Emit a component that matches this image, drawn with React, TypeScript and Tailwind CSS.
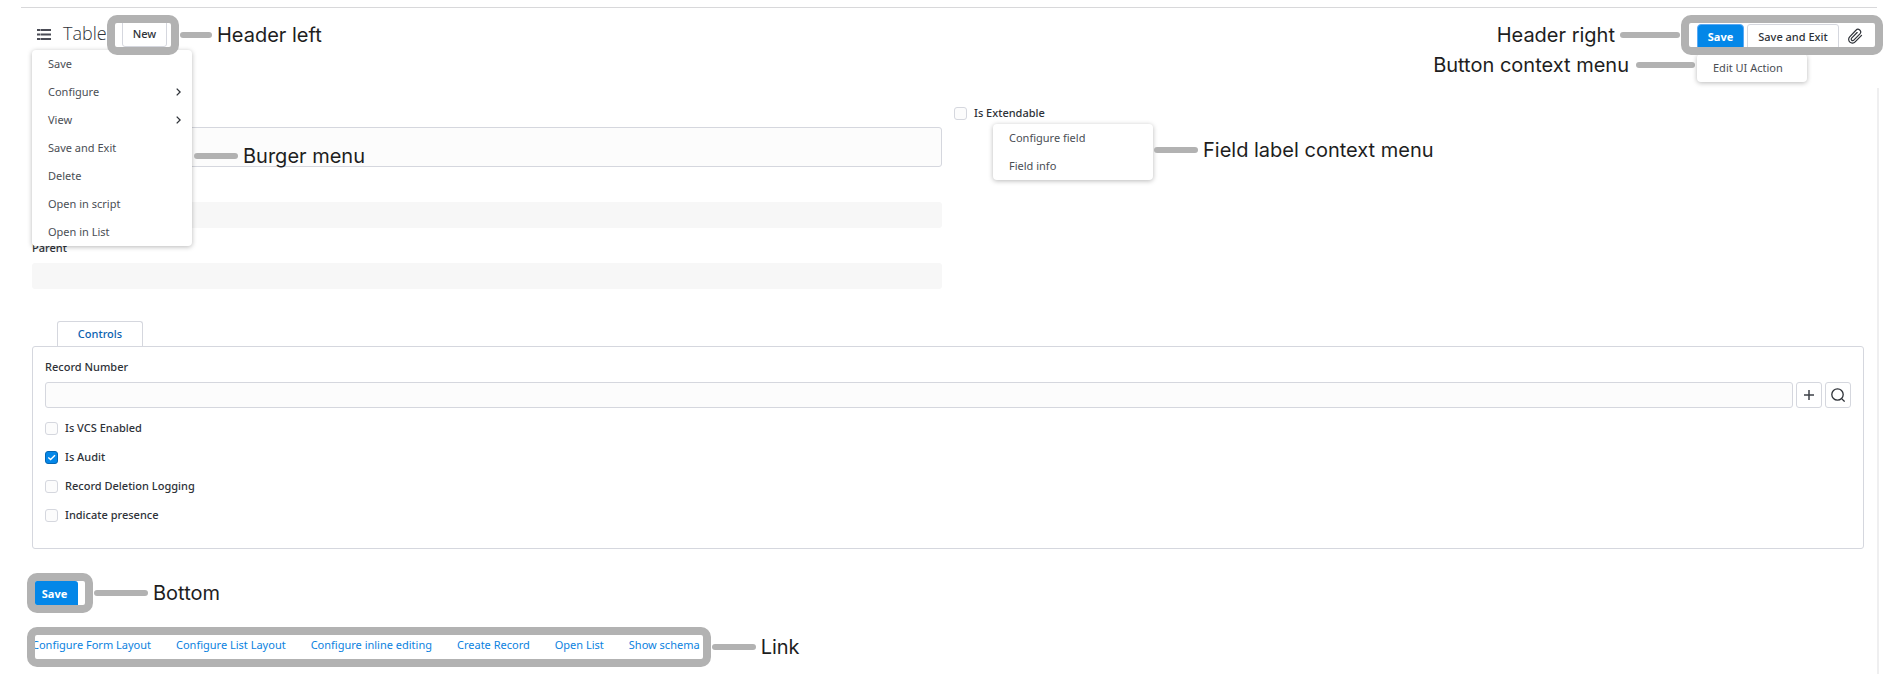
import { ReactNode, useId } from "react";

const burgerItems = [
  { label: "Save" },
  { label: "Configure", nested: true },
  { label: "View", nested: true },
  { label: "Save and Exit" },
  { label: "Delete" },
  { label: "Open in script" },
  { label: "Open in List" },
];

const controls = [
  { label: "Is VCS Enabled" },
  { label: "Is Audit", checked: true },
  { label: "Record Deletion Logging" },
  { label: "Indicate presence" },
];

const links = [
  "Configure Form Layout",
  "Configure List Layout",
  "Configure inline editing",
  "Create Record",
  "Open List",
  "Show schema",
];

function Connector({ className }: { className: string }) {
  return <span className={`h-1.5 shrink-0 rounded-full bg-[#b2b2b2] ${className}`} />;
}

function Note({ children }: { children: ReactNode }) {
  return (
    <span className="whitespace-nowrap font-['Inter',sans-serif] text-xl leading-6 text-[#1e1e1e]">
      {children}
    </span>
  );
}

function Frame({ children, className }: { children: ReactNode; className: string }) {
  return (
    <div
      className={`flex h-10 shrink-0 overflow-hidden rounded-[10px] border-8 border-[#b2b2b2] bg-white ${className}`}
    >
      {children}
    </div>
  );
}

function Menu({
  items,
  className,
}: {
  items: { label: string; nested?: boolean }[];
  className: string;
}) {
  return (
    <ul className={`rounded bg-white shadow-[0_1px_5px_rgba(0,0,0,0.28)] ${className}`}>
      {items.map((item) => (
        <li key={item.label}>
          <button
            type="button"
            className="flex h-7 w-full items-center justify-between whitespace-nowrap pl-4 pr-[11px] text-left text-[11px] text-[#4a4e54]"
          >
            {item.label}
            {item.nested && (
              <svg viewBox="0 0 5 8" className="h-2 w-[5px]" fill="none" stroke="#2e3238" strokeWidth="1.3">
                <path d="M0.7 0.6 4.1 4 0.7 7.4" />
              </svg>
            )}
          </button>
        </li>
      ))}
    </ul>
  );
}

function Checkbox({ label, checked }: { label: string; checked?: boolean }) {
  const id = useId();
  return (
    <div className="flex h-[29px] items-center gap-[7px]">
      <span className="relative flex">
        <input
          id={id}
          type="checkbox"
          defaultChecked={checked}
          className="peer size-[13px] appearance-none rounded-[3px] border border-[#d5d7de] bg-[#fcfcfc] checked:border-[#0566b3] checked:bg-[#0487e8]"
        />
        <svg
          viewBox="0 0 13 13"
          className="pointer-events-none absolute inset-0 hidden size-[13px] peer-checked:block"
          fill="none"
          stroke="#fff"
          strokeWidth="1.4"
        >
          <path d="M3.3 6.5 5.6 8.6 10 4.2" />
        </svg>
      </span>
      <label htmlFor={id} className="text-[11px] font-medium text-[#2e3238]">
        {label}
      </label>
    </div>
  );
}

export default function App() {
  return (
    <div className="bg-white pt-[7px] font-['Noto_Sans',sans-serif] text-[#2e3238]">
      <div className="ml-[21px] mr-3 h-px bg-[#d8d8da]" />

      <header className="flex h-20 justify-between pl-[37px] pr-1.5 pt-[7px]">
        <div className="relative flex h-10 items-center">
          <button type="button" aria-label="Menu" className="mr-3 pb-0.5">
            <svg viewBox="0 0 14 11" className="h-[11px] w-3.5" fill="#4a4c55">
              <path d="M0 0H14V2H0zM0 4.5H14V6.5H0zM0 9H14V11H0z" />
              <path d="M3 0H4V11H3z" fill="#fff" fillOpacity="0.45" />
            </svg>
          </button>
          <h1 className="w-11 pb-1 font-['Open_Sans',sans-serif] text-lg font-light leading-6 text-[#2e3238]">
            Table
          </h1>
          <Frame className="relative z-20 w-[72px] pl-[7px]">
            <button
              type="button"
              className="-mt-2 h-8 w-[45px] rounded-[3px] border border-[#d5d7de] pt-1.5 text-[11px] font-medium"
            >
              New
            </button>
          </Frame>
          <Connector className="ml-px mr-[5px] w-8" />
          <Note>Header left</Note>

          <div className="absolute -left-[5px] top-[35px] z-10 flex items-center">
            <Menu items={burgerItems} className="w-40" />
            <div className="ml-0.5 flex items-center gap-[5px] pt-4">
              <Connector className="w-11" />
              <Note>Burger menu</Note>
            </div>
          </div>
        </div>

        <div className="flex flex-col items-end">
          <div className="relative z-20 flex items-center">
            <Note>Header right</Note>
            <Connector className="ml-[5px] mr-px w-[60px]" />
            <Frame className="w-[202px] items-start gap-[3px] pl-2">
              <button
                type="button"
                className="mt-px h-7 w-[47px] rounded-sm border border-[#5aa9f5] bg-[#0487e8] pb-0.5 text-[11px] font-bold text-white"
              >
                Save
              </button>
              <button
                type="button"
                className="mt-px h-7 w-[92px] whitespace-nowrap rounded-[3px] border border-[#d5d7de] pb-0.5 text-[11px] font-medium"
              >
                Save and Exit
              </button>
              <button type="button" aria-label="Attachments" className="ml-[5px] mt-[5px]">
                <svg
                  viewBox="0 0 24 24"
                  className="size-4"
                  fill="none"
                  stroke="#2e3238"
                  strokeWidth="1.8"
                  strokeLinecap="round"
                  strokeLinejoin="round"
                >
                  <path d="m21.8 11-9.6 9.8a5.4 5.4 0 0 1-8.2-7.6L13.4 3.4a4 4 0 0 1 6 5.4l-9.2 9.4a2.2 2.2 0 0 1-3.3-3l8.3-8.4" />
                </svg>
              </button>
            </Frame>
          </div>
          <div className="relative z-10 -mt-0.5 mr-[76px] flex items-center">
            <div className="flex items-center pb-1.5">
              <Note>Button context menu</Note>
              <Connector className="ml-[7px] mr-0.5 w-[59px]" />
            </div>
            <Menu items={[{ label: "Edit UI Action" }]} className="w-[110px]" />
          </div>
        </div>
      </header>

      <main className="ml-8 mr-2.5 border-r-2 border-[#efeff0] pb-[7px] pr-[13px]">
        <div className="grid grid-cols-2 gap-3">
          <div className="flex flex-col pt-[39px]">
            <textarea
              aria-label="Table"
              className="h-10 resize-none rounded-[3px] border border-[#d5d7de] bg-[#fcfcfc]"
            />
            <input aria-label="Table" disabled className="mt-[35px] h-[26px] rounded-[3px] bg-[#f7f7f7]" />
            <label htmlFor="parent" className="pb-1.5 pt-[11px] text-[11px] font-medium leading-[18px]">
              Parent
            </label>
            <input id="parent" disabled className="h-[26px] rounded-[3px] bg-[#f7f7f7]" />
          </div>
          <div className="relative pt-[11px]">
            <Checkbox label="Is Extendable" />
            <div className="absolute left-[39px] top-9 flex items-center">
              <Menu items={[{ label: "Configure field" }, { label: "Field info" }]} className="w-40" />
              <div className="flex items-center pb-1">
                <Connector className="ml-px mr-[5px] w-11" />
                <Note>Field label context menu</Note>
              </div>
            </div>
          </div>
        </div>

        <div className="mt-8 flex pl-[25px]">
          <button
            type="button"
            className="h-[25px] w-[86px] rounded-t-[3px] border border-b-0 border-[#d5d7de] text-[11px] font-medium text-[#0a62b0]"
          >
            Controls
          </button>
        </div>
        <section className="rounded-[3px] border border-[#d5d7de] px-3 pb-[18px] pt-[11px]">
          <label htmlFor="record-number" className="block text-[11px] font-medium leading-[18px]">
            Record Number
          </label>
          <div className="mb-1.5 mt-1.5 flex gap-[3px]">
            <input
              id="record-number"
              className="h-[26px] min-w-0 grow rounded-[3px] border border-[#d5d7de] bg-[#fcfcfc] px-2 text-[11px]"
            />
            <button
              type="button"
              aria-label="Add"
              className="flex size-[26px] items-center justify-center rounded-[3px] border border-[#d5d7de]"
            >
              <svg viewBox="0 0 10 10" className="size-2.5" stroke="#3e4248" strokeWidth="1.5">
                <path d="M0 5H10M5 0V10" />
              </svg>
            </button>
            <button
              type="button"
              aria-label="Search"
              className="flex size-[26px] items-center justify-center rounded-[3px] border border-[#d5d7de]"
            >
              <svg viewBox="0 0 14 14" className="size-3.5" fill="none" stroke="#2e3238" strokeWidth="1.3">
                <circle cx="6.5" cy="6.5" r="5.7" />
                <path d="M10.4 10.4 13.6 13.6" />
              </svg>
            </button>
          </div>
          {controls.map((control) => (
            <Checkbox key={control.label} {...control} />
          ))}
        </section>

        <div className="-ml-[5px] mt-6 flex items-center">
          <Frame className="w-[66px]">
            <button
              type="button"
              className="h-6 w-[43px] rounded-tr-[3px] bg-[#0487e8] pr-1 pt-0.5 text-[11px] font-bold text-white"
            >
              Save
            </button>
          </Frame>
          <Connector className="ml-px mr-[5px] w-[54px]" />
          <Note>Bottom</Note>
        </div>

        <div className="-ml-[5px] mt-3.5 flex items-center">
          <Frame className="pb-1 pr-[3px]">
            <nav className="-ml-[3px] flex gap-[25px]">
              {links.map((link) => (
                <a key={link} href="#" className="whitespace-nowrap text-[11px] leading-5 text-[#0b82e0]">
                  {link}
                </a>
              ))}
            </nav>
          </Frame>
          <Connector className="ml-px mr-[5px] w-11" />
          <Note>Link</Note>
        </div>
      </main>
    </div>
  );
}
